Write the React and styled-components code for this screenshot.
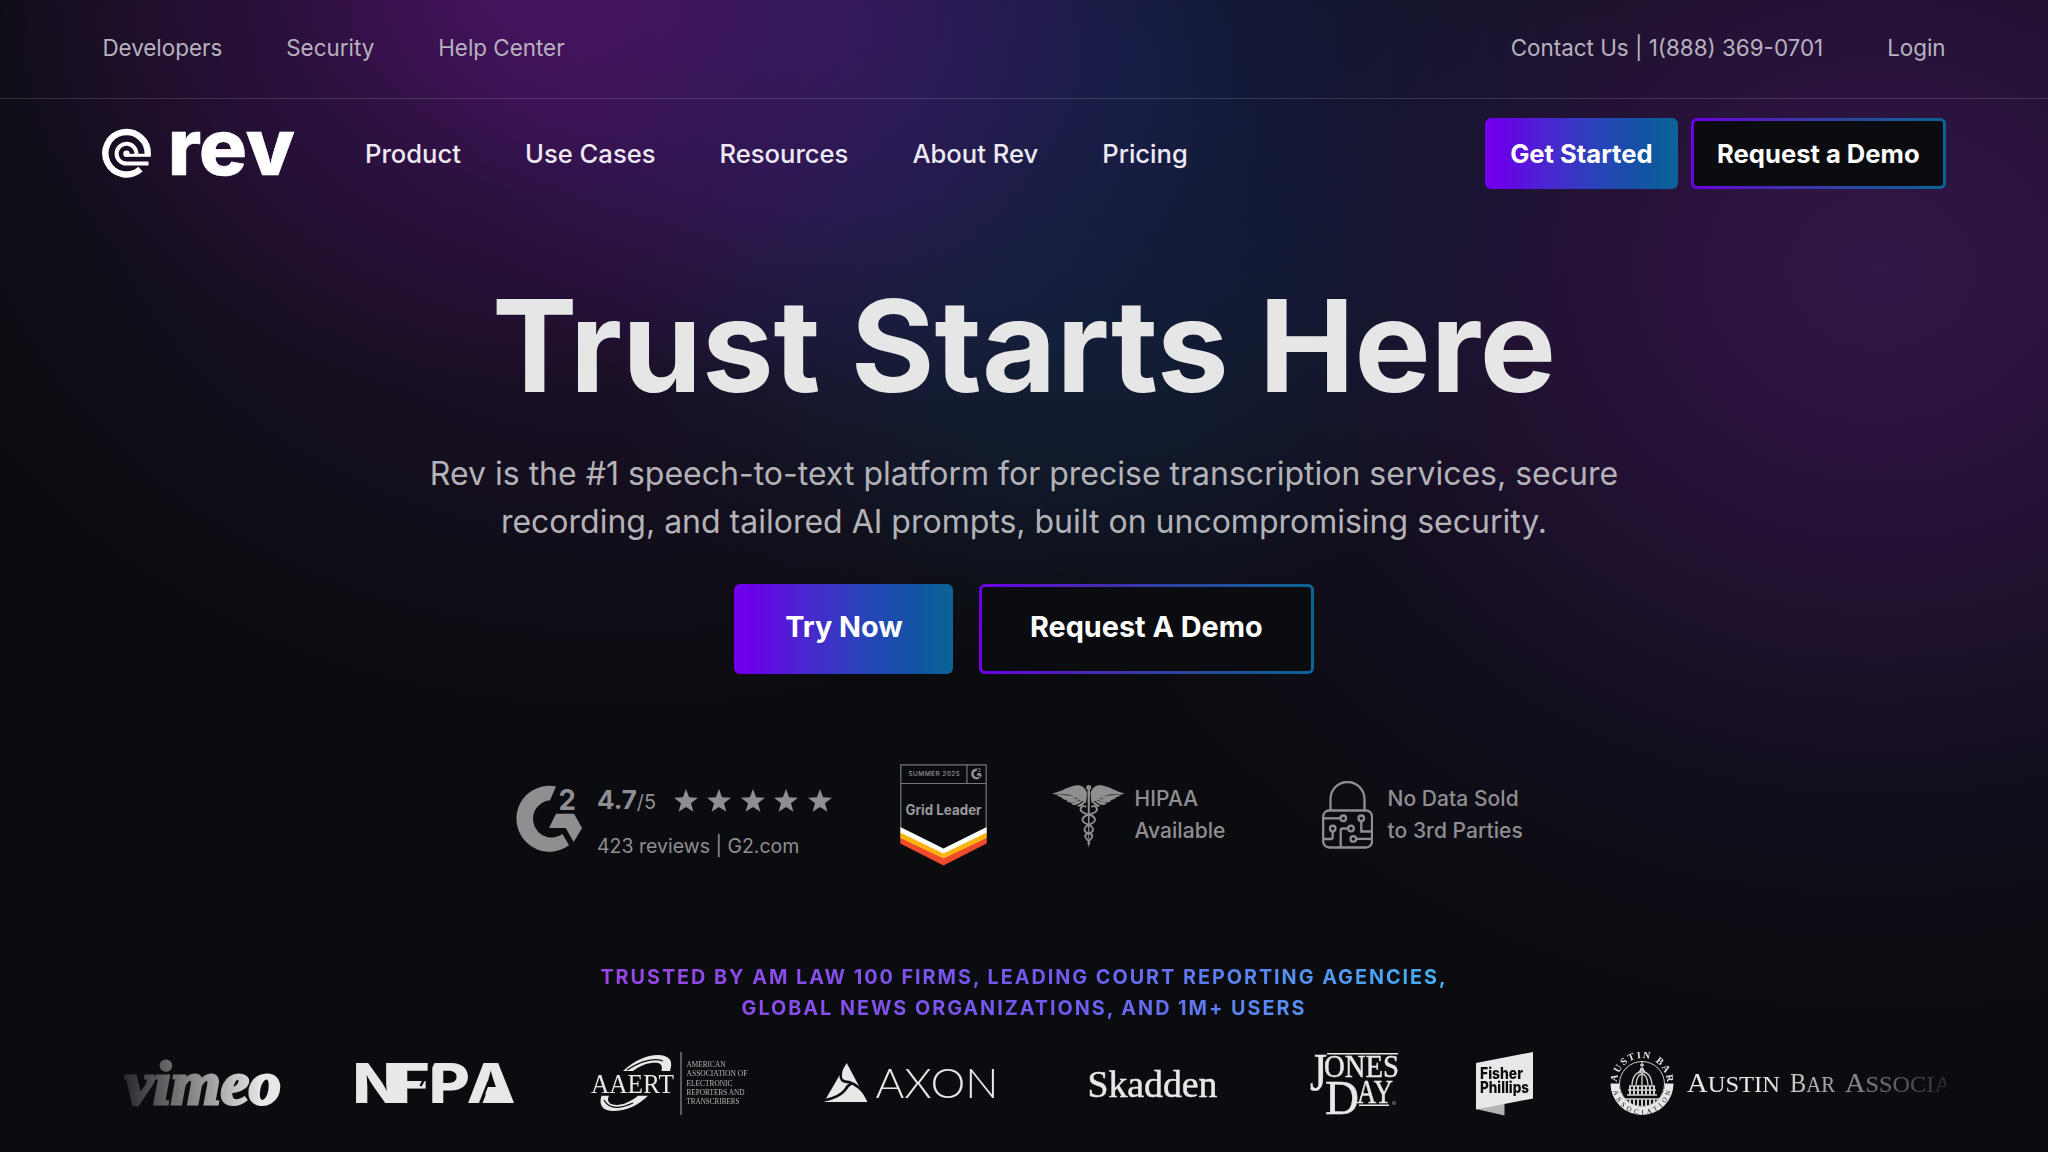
import React from "react";
import styled, { createGlobalStyle } from "styled-components";

const Global = createGlobalStyle`
  * { box-sizing: border-box; }
  body { margin: 0; background: #0b0c10; font-family: Inter, "Liberation Sans", sans-serif; }
`;

const Page = styled.div`
  width: 2048px;
  height: 1152px;
  overflow: hidden;
  display: flex;
  flex-direction: column;
  color: #fff;
  background:
    radial-gradient(ellipse 560px 420px at 540px -20px, rgba(88, 20, 116, 0.74), rgba(70, 18, 100, 0.38) 50%, rgba(60, 16, 90, 0) 100%),
    radial-gradient(ellipse 400px 420px at 830px 20px, rgba(56, 34, 124, 0.55), rgba(50, 30, 110, 0) 100%),
    radial-gradient(ellipse 500px 560px at 1130px 60px, rgba(20, 34, 76, 0.72), rgba(18, 32, 66, 0) 100%),
    radial-gradient(ellipse 440px 320px at 1040px 340px, rgba(16, 42, 56, 0.55), rgba(14, 34, 48, 0) 100%),
    radial-gradient(ellipse 880px 760px at 1880px 270px, rgba(60, 24, 86, 0.8), rgba(54, 22, 80, 0.6) 35%, rgba(36, 19, 64, 0.24) 70%, rgba(30, 16, 60, 0) 100%),
    radial-gradient(ellipse 760px 600px at 620px 120px, rgba(50, 20, 72, 0.62), rgba(30, 12, 50, 0) 100%),
    #0b0c10;
`;

const TopBar = styled.div`
  height: 99px;
  flex: none;
  padding: 0 102.4px 2px;
  border-bottom: 1px solid rgba(255, 255, 255, 0.14);
  display: flex;
  align-items: center;
  justify-content: space-between;
`;

const TopLinks = styled.nav`
  display: flex;
  gap: 64px;
`;

const TopLink = styled.a`
  font-size: 22.4px;
  line-height: 32px;
  color: #b8b1bf;
  white-space: nowrap;
`;

const Header = styled.header`
  height: 109px;
  flex: none;
  padding: 0 102.4px;
  display: flex;
  align-items: center;
`;

const Logo = styled.div`
  display: flex;
  width: 194px;
  height: 50px;
`;

const MainNav = styled.nav`
  display: flex;
  gap: 64px;
  margin-left: 68.6px;
  flex: 1;
`;

const NavLink = styled.a`
  font-size: 25.6px;
  font-weight: 500;
  line-height: 36px;
  color: #efe9f4;
  white-space: nowrap;
`;

const Actions = styled.div`
  display: flex;
  gap: ${(p) => p.$gap};
`;

const Button = styled.a`
  display: flex;
  align-items: center;
  justify-content: center;
  width: ${(p) => p.$w}px;
  height: ${(p) => (p.$large ? 90 : 71)}px;
  padding-bottom: ${(p) => (p.$large ? 5 : 0)}px;
  border-radius: 6px;
  border: ${(p) => (p.$outline ? "3.5px solid transparent" : "0")};
  background: ${(p) =>
    p.$outline
      ? "linear-gradient(#0b0c10, #0b0c10) padding-box, linear-gradient(90deg, #6f00e8, #4a26b8 30%, #2a47a0 62%, #0b6496) border-box"
      : "linear-gradient(90deg, #7300ee 0%, #6a00e8 8%, #4a26d0 32%, #2546b6 62%, #1055a2 85%, #0b6496 100%)"};
  font-size: ${(p) => (p.$large ? 28.8 : 25.6)}px;
  font-weight: 700;
  white-space: nowrap;
`;

const Hero = styled.main`
  display: flex;
  flex-direction: column;
  align-items: center;
`;

const Title = styled.h1`
  margin: 73.5px 0 0;
  font-size: 128px;
  line-height: 128px;
  font-weight: 700;
  color: #e6e6e6;
  white-space: nowrap;
`;

const Lead = styled.p`
  margin: 40.5px 0 38px;
  font-size: 32px;
  line-height: 48px;
  color: #b4b3b8;
  text-align: center;
`;

const Line = styled.span`
  display: block;
  white-space: nowrap;
`;

const Proof = styled.section`
  display: flex;
  align-items: flex-start;
  width: 1014px;
  height: 102px;
  margin-top: 90px;
  color: #8f8f91;
`;

const Rating = styled.div`
  display: flex;
  gap: 15px;
  width: 383px;
  padding-top: 21px;
`;

const RatingBody = styled.div`
  display: flex;
  flex-direction: column;
  gap: 19px;
`;

const Score = styled.div`
  display: flex;
  align-items: baseline;
  height: 30px;
  white-space: nowrap;
  font-size: 19.8px;
  line-height: 30px;
`;

const ScoreValue = styled.b`
  font-size: 26px;
`;

const Stars = styled.span`
  display: flex;
  gap: 9.4px;
  margin-left: 18px;
  align-self: center;
`;

const Reviews = styled.div`
  font-size: 19.5px;
  line-height: 24px;
  white-space: nowrap;
`;

const Assurance = styled.div`
  display: flex;
  align-items: flex-start;
  gap: ${(p) => p.$gap}px;
  margin-left: ${(p) => p.$left}px;
  padding-top: 17px;
  font-size: 21px;
  font-weight: 500;
  line-height: 32px;
  letter-spacing: 0.06px;
  white-space: nowrap;
`;

const AssuranceText = styled.div`
  padding-top: 2px;
`;

const Trusted = styled.h2`
  margin: 96px 0 0;
  width: 852px;
  font-size: 19.8px;
  line-height: 30.7px;
  font-weight: 700;
  letter-spacing: 1.98px;
  text-align: center;
  color: transparent;
  background: linear-gradient(90deg, #9a45e6, #6f5bf0 55%, #45b4f5);
  background-clip: text;
  -webkit-background-clip: text;
`;

const Strip = styled.section`
  display: flex;
  width: 1844px;
  height: 68px;
  margin: 28.6px 0 0 102px;
  overflow: hidden;
  mask-image: linear-gradient(90deg, transparent, #000 160px, #000 1660px, transparent 1875px);
`;

const Brand = styled.svg`
  flex: none;
  width: ${(p) => p.$w}px;
  height: 66px;
  margin-left: ${(p) => p.$left}px;
  overflow: visible;
  fill: #e8e8e8;
`;

const STAR = "M12 0l3.1 8.3 8.9.4-7 5.5 2.4 8.6L12 17.9l-7.4 4.9L7 14.2 0 8.7l8.9-.4z";
const G2C = "M39 .6A33 33 0 1 0 52 59.5L45.5 48.3A18.7 18.7 0 1 1 33 14.4z";
const G2A = "M39 28h18l8 14.3-8.3 14-8-14H32z";

function RevLogo() {
  return (
    <svg width="194" height="50" viewBox="0 0 194 50" overflow="visible">
      <g fill="none" stroke="#fff">
        <path d="M45.700 25.500A21.200 21.200 0 1 0 38.500 40.200" strokeWidth="6.400" />
        <path d="M34.300 26A9.900 9.900 0 1 0 24.500 34.600H46.500" strokeWidth="4" />
        <path d="M24.500 26.300H48.800" strokeWidth="3" />
      </g>
      <circle cx="24.500" cy="24.800" r="3.200" fill="#fff" />
      <text x="65.800" y="46" fontSize="78" fontWeight="800" fill="#fff" stroke="#fff" strokeWidth=".6" textLength="127" lengthAdjust="spacingAndGlyphs">rev</text>
    </svg>
  );
}

function G2Logo() {
  return (
    <svg width="65" height="66" viewBox="0 -.8 65 66" overflow="visible" fill="#8f8f91">
      <path d={G2C} />
      <path d={G2A} />
      <text x="41.500" y="23.700" fontSize="29" fontWeight="700" textLength="17.500" lengthAdjust="spacingAndGlyphs">2</text>
    </svg>
  );
}

function GridBadge() {
  return (
    <svg width="87" height="102" viewBox="0 0 88 102" preserveAspectRatio="none">
      <path d="M.8 63.5V.8h86.4v62.7M.8 19.5h86.4M67.7.8v18.7" fill="none" stroke="#77777a" strokeWidth="1.2" />
      <path d="M.3 63L44 84.500 87.700 63v6.500L44 91.500.3 69.500z" fill="#fff" />
      <path d="M.3 68.500L44 89.500 87.700 68.500v6L44 96 .3 74.500z" fill="#fcb415" />
      <path d="M.3 74L44 94.500 87.700 74v5.500L44 101.500.3 79.500z" fill="#ee4b2b" />
      <g transform="translate(72 4.500) scale(.165)" fill="#8f8f91"><path d={G2C} /><path d={G2A} />
        <text x="41" y="24" fontSize="30" fontWeight="700">2</text></g>
      <text x="8.500" y="12.200" fontSize="6.600" fontWeight="500" fill="#8f8f91" textLength="52">SUMMER 2025</text>
      <text x="5.500" y="51" fontSize="14.200" fontWeight="700" fill="#98989a" textLength="77" lengthAdjust="spacingAndGlyphs">Grid Leader</text>
    </svg>
  );
}

function Wing() {
  return (
    <g>
      <path d="M40 14C38 8 34 5.500 28 6.500C20 8 14 13 5 14.500C11 17 20 14 26 17L39 24z" />
      <path d="M9 15.500C14 20 22 19 30 17zM14 18.500C19 23 26 21 32 18zM19 21.500C24 26 30 23 35 19zM24 24.500C28 28 33 25 37 20zM30 27C34 29 37 26 39 21z" />
    </g>
  );
}

function Caduceus() {
  return (
    <svg width="72" height="68" viewBox="5 2 72 68" fill="#8f8f91">
      <Wing />
      <g transform="translate(83.500 0) scale(-1 1)"><Wing /></g>
      <circle cx="41.700" cy="8.500" r="2.500" />
      <path d="M40.500 11h2.600L42 68h-.6z" />
      <g fill="none" stroke="#8f8f91" strokeWidth="1.900" strokeLinecap="round">
        <path d="M38.500 27.500C34 26 31.500 31 36 33.500S48.500 36 48 41S37.500 45 37.500 50.500S45.500 53 45.300 57S41 60 41.500 65" />
        <path d="M45 27.500C49.500 26 52 31 47.500 33.500S35 36 35.500 41S46 45 46 50.500S38 53 38.200 57S42.500 60 42 65" />
      </g>
    </svg>
  );
}

function CircuitLock() {
  return (
    <svg width="51" height="68" viewBox="0 0 51 68" fill="none" stroke="#8f8f91" strokeWidth="2.300">
      <path d="M8.500 29V18a17 17 0 0 1 34 0v11" />
      <rect x="1.200" y="29.500" width="48.800" height="37" rx="6" />
      <g>
        <circle cx="21.300" cy="37.300" r="2.800" /><path d="M1 37.300h17.500" />
        <circle cx="39.300" cy="37.300" r="2.800" /><path d="M39.300 40v10.500H50" />
        <circle cx="29" cy="47.500" r="2.800" /><path d="M26.200 47.500h-5.500q-2 0-2 2V67" />
        <circle cx="10.700" cy="47.500" r="2.800" /><path d="M10.700 50.300V56q0 2-2 2H1" />
        <circle cx="31.300" cy="57.900" r="2.800" /><path d="M34 57.900H50" />
      </g>
    </svg>
  );
}

const serif = '"Liberation Serif", serif';

function AustinSeal() {
  return (
    <g>
      <path d="M.5 31.500A31.500 31.500 0 0 0 63.500 31.500H55A23 23 0 0 1 9 31.500z" />
      <circle cx="32" cy="32" r="22.500" fill="#0b0c10" stroke="#cfcfcf" strokeWidth="1" />
      <path id="sealTop" d="M7 31A25 25 0 0 1 57 31" fill="none" />
      <path id="sealBottom" d="M2.600 33A29.400 29.400 0 0 0 61.400 33" fill="none" />
      <text fontFamily={serif} fontWeight="700" fontSize="10"><textPath href="#sealTop" startOffset="1" textLength="76">AUSTIN BAR</textPath></text>
      <text fontFamily={serif} fontSize="7" fill="#0b0c10"><textPath href="#sealBottom" startOffset="6" textLength="80">ASSOCIATION</textPath></text>
      <g stroke="#cfcfcf" fill="none" strokeWidth="1.300">
        <path d="M32 9v8M30 13h4M30 17h4M28 21q4-6 8 0M22 33q1-13 10-13t10 13M26 33q1-11 6-11t6 11M32 21v12M19 34h26M18 38h28M17 43h30M14 47h36" />
        <path d="M20 34v9M24 34v9M28 34v9M32 34v9M36 34v9M40 34v9M44 34v9" strokeWidth="2" />
        <path d="M16 47v3M20 47v5M24 47v6M28 47v7M32 47v7M36 47v7M40 47v6M44 47v5M48 47v3" strokeWidth="2" />
      </g>
    </g>
  );
}

function Brands() {
  return (
    <Strip>
      <Brand $w={155} $left={23}>
        <text x="0" y="52" fontFamily={serif} fontStyle="italic" fontWeight="700" fontSize="62" stroke="#e8e8e8" strokeWidth="3" textLength="156" lengthAdjust="spacingAndGlyphs">vimeo</text>
      </Brand>
      <Brand $w={156} $left={77}>
        <text transform="scale(1.150 1)" x="-4 31 62.500 95.500" y="51" fontSize="55" fontWeight="800">NFPA</text>
        <path d="M78 8L63.500 34M131.500 30L122.500 53" fill="none" stroke="#0b0c10" strokeWidth="2.500" />
        <path d="M129.500 41H147V51H125.500z" />
      </Brand>
      <Brand $w={157} $left={78}>
        <path d="M32 19C44 8 57 2.500 68 3C80 4 82 10 79 19H70.500C72 12 69 10 60 11C53 12 47 15 42 19z" />
        <path d="M36 18Q58 4 72 9" fill="none" stroke="#0b0c10" strokeWidth="1.200" />
        <path d="M10.500 43.700C7 54 13 59 22 59C35 59 48 53 57 43.700H47C38 51 29 54 22 52.500C17 51 16 48 18 43.700z" />
        <path d="M13 48Q20 61 42 51" fill="none" stroke="#0b0c10" strokeWidth="1.200" />
        <text x="0" y="40.500" fontFamily={serif} fontSize="28" textLength="83" lengthAdjust="spacingAndGlyphs">AAERT</text>
        <path d="M89.500 0h1v63h-1z" fill="#aaa" />
        <g fontFamily={serif} fontSize="7.400" fill="#b5b5b5">
          <text x="95.500" y="15" textLength="39" lengthAdjust="spacingAndGlyphs">AMERICAN</text>
          <text x="95.500" y="24" textLength="61" lengthAdjust="spacingAndGlyphs">ASSOCIATION OF</text>
          <text x="95.500" y="33.500" textLength="46" lengthAdjust="spacingAndGlyphs">ELECTRONIC</text>
          <text x="95.500" y="43" textLength="58" lengthAdjust="spacingAndGlyphs">REPORTERS AND</text>
          <text x="95.500" y="52" textLength="53" lengthAdjust="spacingAndGlyphs">TRANSCRIBERS</text>
        </g>
      </Brand>
      <Brand $w={170} $left={76}>
        <path d="M22.700 11L43.500 50H0z" />
        <path d="M20 10Q14.500 24 18 28Q20 30 25 30Q35 33 44 46M28 31Q24 33 21 38Q16 45 0 48.500" fill="none" stroke="#0b0c10" strokeWidth="2.600" />
        <text x="51.500" y="45.500" fontFamily="Lato, sans-serif" fontWeight="300" fontSize="41.500" textLength="123" lengthAdjust="spacingAndGlyphs">AXON</text>
      </Brand>
      <Brand $w={129} $left={94}>
        <text x="-.5" y="44.700" fontFamily={serif} fontSize="38.500" stroke="#e8e8e8" strokeWidth=".5" textLength="130" lengthAdjust="spacingAndGlyphs">Skadden</text>
      </Brand>
      <Brand $w={88} $left={93}>
        <g fontFamily={serif} stroke="#e8e8e8" strokeWidth=".5">
          <text x="0" y="38" fontSize="52" textLength="17" lengthAdjust="spacingAndGlyphs">J</text>
          <text x="14" y="25" fontSize="32" textLength="75" lengthAdjust="spacingAndGlyphs">ONES</text>
          <text x="15" y="61.500" fontSize="49" textLength="34" lengthAdjust="spacingAndGlyphs">D</text>
          <text x="47" y="51" fontSize="33" textLength="36" lengthAdjust="spacingAndGlyphs">AY</text>
        </g>
        <path d="M17 1h71v1.500H17zM49 52.500h30V54H49z" />
        <text x="82" y="54" fontSize="6" fill="#999">®</text>
      </Brand>
      <Brand $w={57} $left={78}>
        <path d="M0 57L28.500 51v12.500z" fill="#b4b4b4" />
        <path d="M0 11L57 0v46.500L0 57.500z" />
        <g fill="#0b0c10" fontSize="15.500" fontWeight="800">
          <text x="4" y="27" textLength="43" lengthAdjust="spacingAndGlyphs">Fisher</text>
          <text x="4" y="40.500" textLength="49" lengthAdjust="spacingAndGlyphs">Phillips</text>
        </g>
      </Brand>
      <Brand $w={480} $left={77}>
        <AustinSeal />
        <g fontFamily={serif}>
          <text x="77" y="39.500" fontSize="28" textLength="93" lengthAdjust="spacingAndGlyphs">A<tspan fontSize="24">USTIN</tspan></text>
          <text x="180" y="39.500" fontSize="28" textLength="45" lengthAdjust="spacingAndGlyphs">B<tspan fontSize="24">AR</tspan></text>
          <text x="235" y="39.500" fontSize="28" textLength="162" lengthAdjust="spacingAndGlyphs">A<tspan fontSize="24">SSOCIATION</tspan></text>
        </g>
      </Brand>
    </Strip>
  );
}

export default function App() {
  return (
    <Page>
      <Global />
      <TopBar>
        <TopLinks>
          <TopLink>Developers</TopLink>
          <TopLink>Security</TopLink>
          <TopLink>Help Center</TopLink>
        </TopLinks>
        <TopLinks>
          <TopLink>Contact Us | 1(888) 369-0701</TopLink>
          <TopLink>Login</TopLink>
        </TopLinks>
      </TopBar>
      <Header>
        <Logo><RevLogo /></Logo>
        <MainNav>
          {["Product", "Use Cases", "Resources", "About Rev", "Pricing"].map((t) => <NavLink key={t}>{t}</NavLink>)}
        </MainNav>
        <Actions $gap="13px">
          <Button $w={193.5}>Get Started</Button>
          <Button $w={254.5} $outline>Request a Demo</Button>
        </Actions>
      </Header>
      <Hero>
        <Title>Trust Starts Here</Title>
        <Lead>
          <Line>Rev is the #1 speech-to-text platform for precise transcription services, secure</Line>
          <Line>recording, and tailored AI prompts, built on uncompromising security.</Line>
        </Lead>
        <Actions $gap="25.600px">
          <Button $w={219} $large>Try Now</Button>
          <Button $w={334.5} $large $outline>Request A Demo</Button>
        </Actions>
        <Proof>
          <Rating>
            <G2Logo />
            <RatingBody>
              <Score>
                <ScoreValue>4.7</ScoreValue>/5
                <Stars>
                  {[0, 1, 2, 3, 4].map((i) => (
                    <svg key={i} width="24" height="23" viewBox="0 0 24 23" fill="#8f8f91"><path d={STAR} /></svg>
                  ))}
                </Stars>
              </Score>
              <Reviews>423 reviews | G2.com</Reviews>
            </RatingBody>
          </Rating>
          <GridBadge />
          <Assurance $gap={10.5} $left={65}>
            <Caduceus />
            <AssuranceText><Line>HIPAA</Line><Line>Available</Line></AssuranceText>
          </Assurance>
          <Assurance $gap={14.5} $left={96.5}>
            <CircuitLock />
            <AssuranceText><Line>No Data Sold</Line><Line>to 3rd Parties</Line></AssuranceText>
          </Assurance>
        </Proof>
        <Trusted>
          <Line>TRUSTED BY AM LAW 100 FIRMS, LEADING COURT REPORTING AGENCIES,</Line>
          <Line>GLOBAL NEWS ORGANIZATIONS, AND 1M+ USERS</Line>
        </Trusted>
      </Hero>
      <Brands />
    </Page>
  );
}
